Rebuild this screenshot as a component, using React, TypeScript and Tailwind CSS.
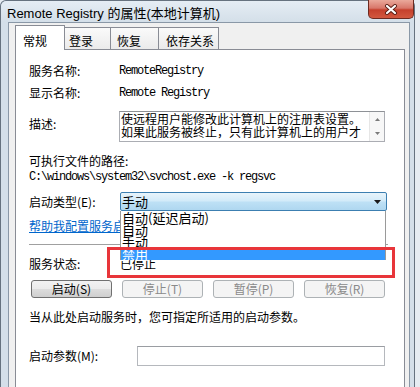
import React from "react";

const MONO =
  "[font-family:'Liberation_Mono',monospace] text-[12px] leading-[12px] tracking-[-1.2px] whitespace-pre";

function Btn({ label, disabled }: { label: string; disabled?: boolean }) {
  if (disabled) {
    return (
      <div className="w-[81px] h-[18px] flex items-center justify-center rounded-[3px] border border-[#adb2b5] bg-[#f4f4f4] text-[12px] leading-[14px] text-[#8a8a8a]">
        {label}
      </div>
    );
  }
  return (
    <div className="w-[81px] h-[18px] flex items-center justify-center rounded-[3px] border border-[#707070] bg-[linear-gradient(#f2f2f2_0%,#ebebeb_50%,#dddddd_50%,#cfcfcf_100%)] text-[12px] leading-[14px] text-black">
      {label}
    </div>
  );
}

export default function App() {
  return (
    <div className="relative w-[420px] h-[387px] overflow-hidden bg-[#e6ecf2] text-black [font-family:'Noto_Sans_CJK_SC',sans-serif]">
      {/* window */}
      <div className="w-[415px] h-[400px] border-l border-t border-r border-[#66727f] rounded-t-[6px] bg-[#d4dfe9] flex flex-col">
        {/* title bar */}
        <div className="h-[27px] flex justify-between items-start bg-[linear-gradient(#e5edf4,#d4dfe9)] rounded-t-[6px]">
          <div className="pl-[6px] pt-[5px] text-[13px] leading-[16px] whitespace-nowrap [font-family:'Liberation_Sans','Noto_Sans_CJK_SC',sans-serif]">
            Remote Registry 的属性(本地计算机)
          </div>
          <div className="-mt-px w-[46px] h-[19px] rounded-b-[5px] border border-t-0 border-[#6d2a20] bg-[linear-gradient(#eaa99b_0%,#d8776a_45%,#c5402c_55%,#d2583f_100%)] flex items-center justify-center">
            <svg width="14" height="11" viewBox="0 0 14 11">
              <path d="M3 2 L11 9 M11 2 L3 9" stroke="#5a1d14" strokeWidth="4" strokeLinecap="round" />
              <path d="M3 2 L11 9 M11 2 L3 9" stroke="#ffffff" strokeWidth="2.2" strokeLinecap="round" />
            </svg>
          </div>
        </div>

        {/* client area */}
        <div className="ml-[7px] w-[402px] flex-1 border-l border-r border-t border-[#8a98a7] bg-[#f0f0f0]">
          {/* tabs */}
          <div className="ml-[6px] mt-[2px] h-[24px] flex items-end relative z-10">
            <div className="w-[50px] h-[25px] -mb-px bg-white border-l border-r border-t border-[#898c95] pl-[7px] pt-[8px] text-[12px] leading-[14px]">
              常规
            </div>
            <div className="w-[46px] h-[22px] bg-[linear-gradient(#fafafa,#ebebeb)] border-r border-t border-[#898c95] pl-[4px] pt-[6px] text-[12px] leading-[14px]">
              登录
            </div>
            <div className="w-[48px] h-[22px] bg-[linear-gradient(#fafafa,#ebebeb)] border-r border-t border-[#898c95] pl-[6px] pt-[6px] text-[12px] leading-[14px]">
              恢复
            </div>
            <div className="w-[60px] h-[22px] bg-[linear-gradient(#fafafa,#ebebeb)] border-r border-t border-[#898c95] pl-[7px] pt-[6px] text-[12px] leading-[14px]">
              依存关系
            </div>
          </div>

          {/* panel */}
          <div className="ml-[6px] w-[390px] h-[360px] bg-white border border-[#898c95] pl-[13px] flex flex-col">
            <div className="mt-[11px] h-[20px] flex items-center">
              <div className="w-[90px] text-[12px] leading-[14px]">服务名称:</div>
              <div className={MONO}>RemoteRegistry</div>
            </div>
            <div className="mt-[2px] h-[20px] flex items-center">
              <div className="w-[90px] text-[12px] leading-[14px]">显示名称:</div>
              <div className={MONO}>Remote Registry</div>
            </div>
            <div className="mt-[8px] flex items-start">
              <div className="w-[90px] pt-[6px] text-[12px] leading-[14px]">描述:</div>
              <div className="w-[266px] h-[31px] border border-[#abadb3] border-t-[#8e9196] flex">
                <div className="flex-1 pl-[1px] text-[12px] leading-[13px] whitespace-nowrap overflow-hidden">
                  <div>使远程用户能修改此计算机上的注册表设置。</div>
                  <div>如果此服务被终止，只有此计算机上的用户才</div>
                </div>
                <div className="w-[15px] h-full bg-[#f7f7f7] border-l border-[#e6e6e6] flex flex-col items-center justify-between py-[6px]">
                  <svg width="5" height="3" viewBox="0 0 5 3">
                    <path d="M0 3 L2.5 0 L5 3 Z" fill="#7a7a7a" />
                  </svg>
                  <svg width="5" height="3" viewBox="0 0 5 3">
                    <path d="M0 0 L5 0 L2.5 3 Z" fill="#7a7a7a" />
                  </svg>
                </div>
              </div>
            </div>
            <div className="mt-[12px] h-[14px] text-[12px] leading-[14px]">可执行文件的路径:</div>
            <div className={"mt-[3px] h-[12px] " + MONO}>C:\windows\system32\svchost.exe -k regsvc</div>

            <div className="mt-[9px] h-[19px] flex items-center">
              <div className="w-[91px] text-[12px] leading-[14px]">启动类型(E):</div>
              <div className="relative w-[267px] h-[19px]">
                <div className="w-full h-full rounded-[2px] border border-[#3c7fb1] bg-[linear-gradient(#e8f4fb_0%,#d3ebf9_45%,#bde0f5_55%,#afd7f0_100%)] flex items-center justify-between pl-[1px] pr-[5px]">
                  <span className="text-[13px] leading-[15px]">手动</span>
                  <svg width="7" height="4" viewBox="0 0 7 4">
                    <path d="M0 0 L7 0 L3.5 4 Z" fill="#1a1a1a" />
                  </svg>
                </div>
                <div className="absolute z-20 left-0 top-[19px] w-[266px] h-[49px] bg-white border-l border-r border-[#9a9a9a] pt-px">
                  <div className="h-[12px] pl-[1px] text-[13px] leading-[12px] whitespace-nowrap">自动(延迟启动)</div>
                  <div className="h-[12px] pl-[1px] text-[13px] leading-[12px] whitespace-nowrap">自动</div>
                  <div className="h-[12px] pl-[1px] text-[13px] leading-[12px] whitespace-nowrap">手动</div>
                  <div className="h-[12px] pl-[1px] text-[13px] leading-[12px] whitespace-nowrap bg-[#3399ff] text-white">禁用</div>
                </div>
              </div>
            </div>

            <div className="mt-[8px] h-[14px] text-[12px] leading-[14px] text-[#0066cc] underline whitespace-nowrap">
              帮助我配置服务启动选项。
            </div>
            <div className="mt-[11px] w-[359px] h-px bg-[#a0a0a0]" />

            <div className="mt-[12px] h-[14px] flex items-center">
              <div className="w-[91px] text-[12px] leading-[14px]">服务状态:</div>
              <div className="text-[12px] leading-[14px]">已停止</div>
            </div>

            <div className="mt-[9px] pl-[2px] flex gap-[10px]">
              <Btn label="启动(S)" />
              <Btn label="停止(T)" disabled />
              <Btn label="暂停(P)" disabled />
              <Btn label="恢复(R)" disabled />
            </div>

            <div className="mt-[12px] h-[14px] text-[12px] leading-[14px] whitespace-nowrap">
              当从此处启动服务时，您可指定所适用的启动参数。
            </div>

            <div className="mt-[22px] h-[20px] flex items-center">
              <div className="w-[108px] text-[12px] leading-[14px]">启动参数(M):</div>
              <div className="w-[248px] h-[20px] border border-[#b5b8bd] border-t-[#9a9da2] bg-white" />
            </div>
          </div>
        </div>
      </div>

      {/* red annotation box */}
      <div className="absolute z-30 left-[107px] top-[247px] w-[288px] h-[31px] border-[3px] border-[#e8353a]" />
    </div>
  );
}
